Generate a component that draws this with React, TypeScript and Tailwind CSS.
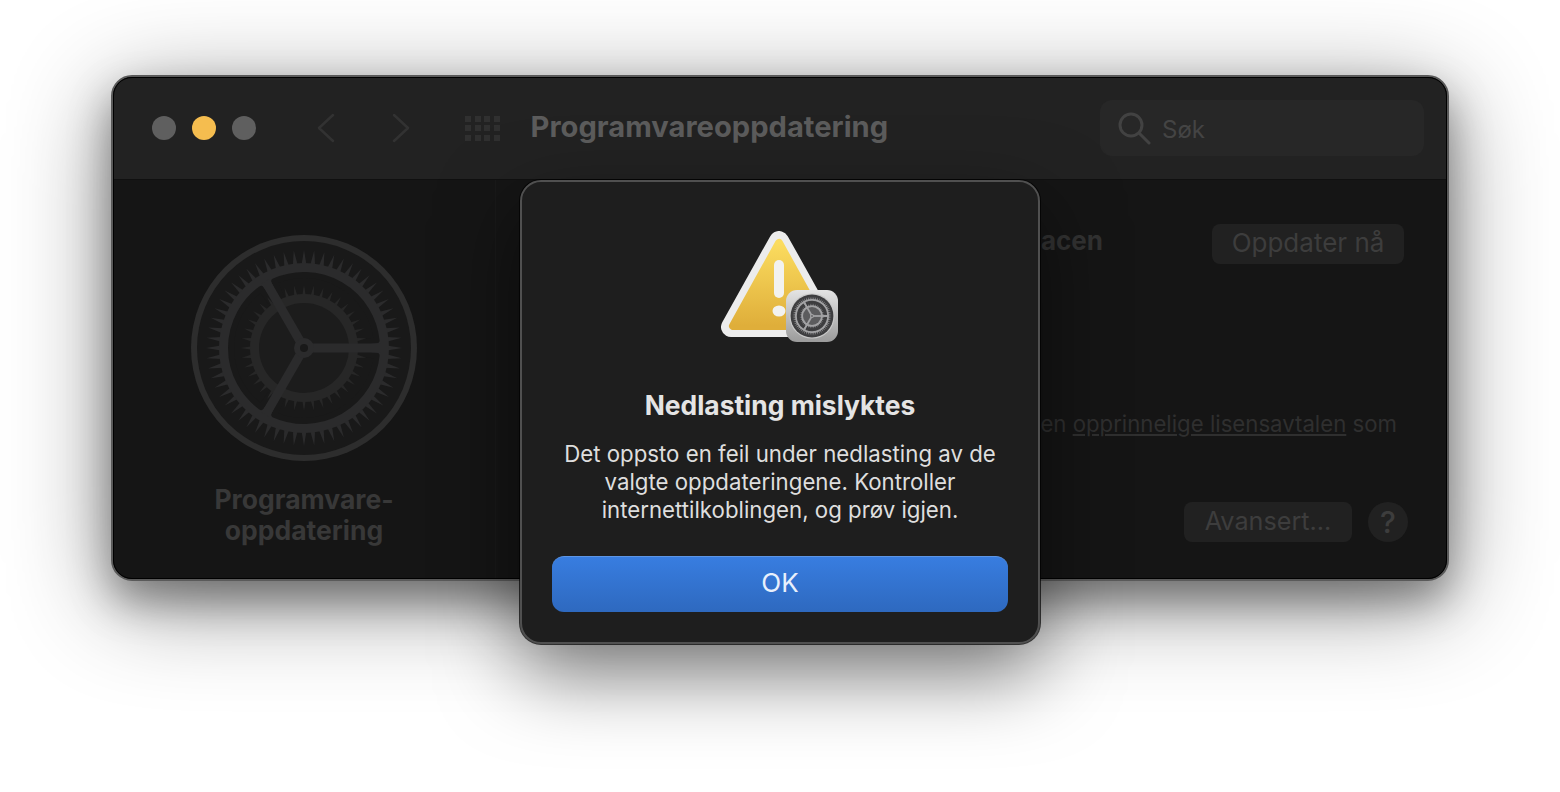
import React from 'react';

const polar = (r: number, deg: number) => {
  const a = (deg * Math.PI) / 180;
  return [r * Math.cos(a), r * Math.sin(a)];
};

// one tooth: narrow spike with its base on the ring
const tooth = (r1: number, r2: number, deg: number, half: number) => {
  const [ax, ay] = polar(r1, deg - half);
  const [bx, by] = polar(r1, deg + half);
  const [cx, cy] = polar(r2, deg);
  return `M${ax} ${ay}L${cx} ${cy}L${bx} ${by}Z`;
};

// window between two spokes
const sector = (ro: number, ri: number, a1: number, a2: number) => {
  const [ax, ay] = polar(ro, a1);
  const [bx, by] = polar(ro, a2);
  const [cx, cy] = polar(ri, a2);
  const [dx, dy] = polar(ri, a1);
  return `M${ax} ${ay}A${ro} ${ro} 0 0 1 ${bx} ${by}L${cx} ${cy}A${ri} ${ri} 0 0 0 ${dx} ${dy}Z`;
};

type GearProps = {
  size: number;
  rim: string;
  well: string;
  metal: string;
  innerMetal: string;
  disc: string;
};

const Gear = ({ size, rim, well, metal, innerMetal, disc }: GearProps) => {
  const outer = Array.from({ length: 60 }, (_, i) => i * 6);
  const inner = Array.from({ length: 40 }, (_, i) => i * 9);
  return (
    <svg width={size} height={size} viewBox="-115 -115 230 230">
      <circle r="113" fill={rim} />
      <circle r="107" fill={well} />
      {outer.map((d) => (
        <path key={d} d={tooth(83, 98, d, 1.7)} fill={metal} />
      ))}
      <circle r="85" fill={metal} />
      {[
        [-114, -6],
        [6, 114],
        [126, 234],
      ].map(([a, b]) => (
        <path key={a} d={sector(73, 47, a, b)} fill={well} stroke={well} strokeWidth="6" strokeLinejoin="round" />
      ))}
      {inner.map((d) => (
        <path key={d} d={tooth(52, 63, d, 2)} fill={innerMetal} />
      ))}
      <circle r="54" fill={innerMetal} />
      <circle r="45" fill={disc} />
      {[0, 120, 240].map((d) => {
        const [x, y] = polar(77, d);
        return <line key={d} x1="0" y1="0" x2={x} y2={y} stroke={metal} strokeWidth="9" />;
      })}
      <circle r="10" fill={metal} />
      <circle r="4" fill={well} />
    </svg>
  );
};

const WarningIcon = () => (
  <svg width="118" height="112" viewBox="0 0 118 112" className="block">
    <defs>
      <linearGradient id="amber" x1="0" y1="0" x2="0" y2="1">
        <stop offset="0" stopColor="#fbdc5f" />
        <stop offset="1" stopColor="#dfae3a" />
      </linearGradient>
    </defs>
    <path d="M58 10 L10 96 H106 Z" fill="#ececec" stroke="#ececec" strokeWidth="20" strokeLinejoin="round" />
    <path d="M58 12 L12 95 H104 Z" fill="url(#amber)" stroke="url(#amber)" strokeWidth="8" strokeLinejoin="round" />
    <rect x="53" y="29" width="10" height="38" rx="5" fill="#f2f2f0" />
    <ellipse cx="58" cy="80" rx="6.5" ry="5.5" fill="#f2f2f0" />
  </svg>
);

const App = () => {
  return (
    <div className="relative w-[1560px] h-[792px] overflow-hidden bg-white font-['Inter',sans-serif]">
      {/* Settings window */}
      <div className="absolute left-[111px] top-[75px] w-[1338px] h-[506px] rounded-[21px] overflow-hidden bg-[#151515] flex flex-col border-2 border-[#5a5a5a] outline-1 -outline-offset-3 outline-black shadow-[0_20px_40px_rgba(0,0,0,0.35),0_20px_100px_rgba(0,0,0,0.45)]">
        <div className="h-[103px] shrink-0 bg-[#222222] border-b border-[#101010] flex items-center pl-[39px] pr-[23px]">
          <div className="flex gap-4">
            <span className="w-6 h-6 rounded-full bg-[#5f5f5f]" />
            <span className="w-6 h-6 rounded-full bg-[#f5bd4f]" />
            <span className="w-6 h-6 rounded-full bg-[#5f5f5f]" />
          </div>
          <svg width="20" height="32" viewBox="0 0 20 32" fill="none" stroke="#323232" strokeWidth="2.5" strokeLinecap="round" strokeLinejoin="round" className="ml-[60px]">
            <path d="M17 3 L3 16 L17 29" />
          </svg>
          <svg width="20" height="32" viewBox="0 0 20 32" fill="none" stroke="#323232" strokeWidth="2.5" strokeLinecap="round" strokeLinejoin="round" className="ml-[55px]">
            <path d="M3 3 L17 16 L3 29" />
          </svg>
          <div className="ml-[54px] grid grid-cols-4 gap-[3.5px]">
            {Array.from({ length: 12 }, (_, i) => (
              <span key={i} className="w-[6px] h-[6px] bg-[#303030]" />
            ))}
          </div>
          <div className="ml-[31px] pb-[3px] text-[29.15px] font-bold leading-none text-[#5c5c5c] whitespace-nowrap">Programvareoppdatering</div>
          <div className="ml-auto w-[324px] h-14 rounded-xl bg-[#272727] flex items-center pl-[18px] gap-[11px]">
            <svg width="33" height="33" viewBox="0 0 33 33" fill="none" stroke="#424242" strokeWidth="3" strokeLinecap="round">
              <circle cx="13" cy="13" r="11" />
              <path d="M21 21 L31 31" />
            </svg>
            <span className="mt-1 text-2xl text-[#444444]">Søk</span>
          </div>
        </div>

        <div className="flex-1 flex min-h-0">
          <div className="w-[383px] shrink-0 flex flex-col items-center pt-[53px] border-r border-[#191919]">
            <Gear size={230} rim="#2d2d2d" well="#191919" metal="#2b2b2c" innerMetal="#272727" disc="#1c1c1c" />
            <div className="mt-[21px] text-[26.5px] font-bold leading-[31px] text-center text-[#383838]">
              Programvare-
              <br />
              oppdatering
            </div>
          </div>

          <div className="flex-1 flex flex-col items-end min-w-0 pt-[44px] pb-[37px] pr-[39px]">
            <div className="flex items-start pr-[4px]">
              <span className="text-[26px] font-bold leading-[34px] text-[#323232] whitespace-nowrap">for denne Macen</span>
              <span className="ml-[109px] w-48 h-10 pb-1 rounded-lg bg-[#212121] flex items-center justify-center text-[26px] text-[#3d3d3d]">Oppdater nå</span>
            </div>
            <p className="mt-[146px] pr-[11px] text-[22.2px] leading-7 text-[#2f2f2f] whitespace-nowrap">
              den <span className="underline">opprinnelige lisensavtalen</span> som
            </p>
            <div className="mt-auto flex gap-4">
              <span className="w-[168px] h-10 rounded-lg bg-[#212121] flex items-center justify-center text-[25.2px] text-[#3d3d3d]">Avansert...</span>
              <span className="w-10 h-10 rounded-full bg-[#212121] flex items-center justify-center text-[30px] font-medium text-[#3d3d3d]">?</span>
            </div>
          </div>
        </div>
      </div>

      {/* Alert sheet */}
      <div className="absolute left-[520px] top-[180px] w-[520px] h-[464px] rounded-[21px] bg-[#1e1e1e] border-2 border-[#505050] shadow-[0_0_0_1px_rgba(0,0,0,0.7),0_30px_80px_rgba(0,0,0,0.5)] flex flex-col items-center pt-[49px] px-[30px]">
        <div className="relative w-[118px] h-[112px]">
          <WarningIcon />
          <div className="absolute left-[65px] top-[59px] w-[52px] h-[52px] rounded-[11px] bg-[linear-gradient(#e4e4e4,#9b9b9b)] flex items-center justify-center">
            <Gear size={46} rim="#c9c9c9" well="#3d3d3f" metal="#a2a2a4" innerMetal="#a2a2a4" disc="#5c5c5e" />
          </div>
        </div>
        <h1 className="mt-[46px] text-[26.4px] font-bold leading-[32px] text-[#e4e4e4]">Nedlasting mislyktes</h1>
        <p className="mt-[19px] w-full text-[22.25px] leading-7 text-center text-[#dedede]">
          Det oppsto en feil under nedlasting av de
          <br />
          valgte oppdateringene. Kontroller
          <br />
          internettilkoblingen, og prøv igjen.
        </p>
        <button className="mt-[32px] w-full h-14 pb-1 rounded-xl bg-[linear-gradient(#387de0,#2e69bf)] border-t border-[#5d95e4] text-[26px] text-[#e8f0fc]">OK</button>
      </div>
    </div>
  );
};

export default App;
